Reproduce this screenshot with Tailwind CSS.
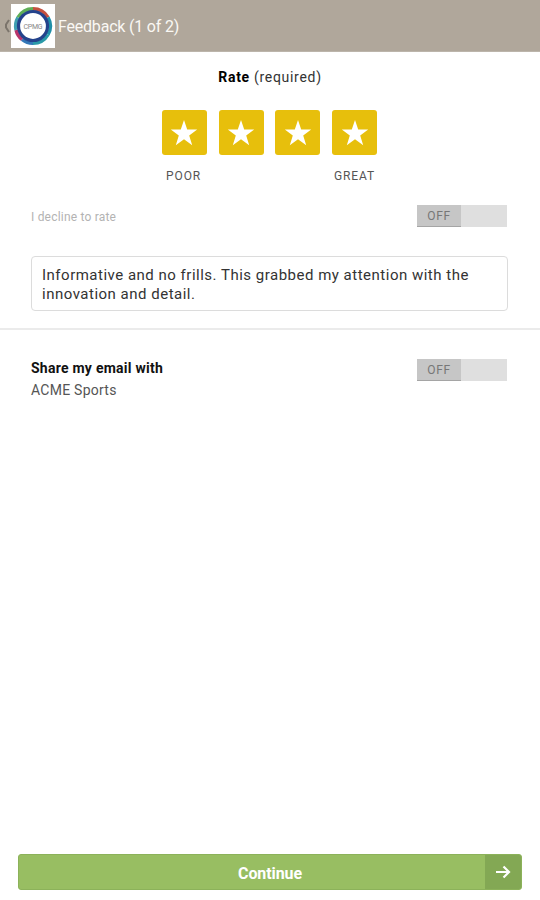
<!DOCTYPE html>
<html lang="en">
<head>
    <meta charset="UTF-8">
    <meta name="viewport" content="width=device-width, initial-scale=1.0">
    <title>Feedback</title>
    <script src="https://cdn.jsdelivr.net/npm/@tailwindcss/browser@4"></script>
</head>
<body class="bg-white font-['Roboto',sans-serif] text-[#333]">
    <div class="flex h-[900px] w-[540px] flex-col overflow-hidden">

        <header class="flex h-[52px] shrink-0 items-center border-b border-[#bcb5ab] bg-[#b0a79b]">
            <svg class="ml-[3px] h-4 w-2" viewBox="0 0 8 16" fill="none" stroke="#7b746b" stroke-width="2">
                <path d="M6 2L3 6.500v3L6 14"/>
            </svg>
            <div class="h-11 w-11 bg-white">
                <svg class="h-11 w-11" viewBox="0 0 44 44" fill="none">
                    <g stroke-width="3.500">
                        <path d="M22 4.700A17.300 17.300 0 0 1 37 13.400" stroke="#c4513f"/>
                        <path d="M37 13.400A17.300 17.300 0 0 1 37 30.700" stroke="#1f8fa8"/>
                        <path d="M37 30.700A17.300 17.300 0 0 1 22 39.300" stroke="#2a9aa8"/>
                        <path d="M22 39.300A17.300 17.300 0 0 1 11 35.500" stroke="#3478b8"/>
                        <path d="M11 35.500A17.300 17.300 0 0 1 5.100 26" stroke="#b8356c"/>
                        <path d="M5.100 26A17.300 17.300 0 0 1 7 13.400" stroke="#3f9fb0"/>
                        <path d="M7 13.400A17.300 17.300 0 0 1 22 4.700" stroke="#5fae57"/>
                    </g>
                    <circle cx="22" cy="22" r="14.500" stroke="#24438c" stroke-width="3.200"/>
                    <text x="22" y="24.500" text-anchor="middle" textLength="19" font-size="7" fill="#888">CPMG</text>
                </svg>
            </div>
            <h1 class="ml-[3px] mt-[2px] text-[16px] tracking-[-0.2px] text-[#faf8f4]">Feedback (1 of 2)</h1>
        </header>

        <section class="flex flex-col items-center">
            <h2 class="mt-[15px] text-[14px] leading-5 tracking-[0.7px]"><b class="font-bold text-black">Rate</b> (required)</h2>
            <div class="mt-[23px] flex gap-[11.700px] pr-px">
                <div class="flex h-[45px] w-[45px] items-center justify-center rounded-[3px] bg-[#e7bf0c]">
                    <svg class="h-7 w-7" viewBox="0 0 28 28" fill="#fff"><path d="M14 1l3.200 9.500h10l-8 6 3 9.700-8.200-5.900-8.200 5.900 3-9.700-8-6h10z"/></svg>
                </div>
                <div class="flex h-[45px] w-[45px] items-center justify-center rounded-[3px] bg-[#e7bf0c]">
                    <svg class="h-7 w-7" viewBox="0 0 28 28" fill="#fff"><path d="M14 1l3.200 9.500h10l-8 6 3 9.700-8.200-5.900-8.200 5.900 3-9.700-8-6h10z"/></svg>
                </div>
                <div class="flex h-[45px] w-[45px] items-center justify-center rounded-[3px] bg-[#e7bf0c]">
                    <svg class="h-7 w-7" viewBox="0 0 28 28" fill="#fff"><path d="M14 1l3.200 9.500h10l-8 6 3 9.700-8.200-5.900-8.200 5.900 3-9.700-8-6h10z"/></svg>
                </div>
                <div class="flex h-[45px] w-[45px] items-center justify-center rounded-[3px] bg-[#e7bf0c]">
                    <svg class="h-7 w-7" viewBox="0 0 28 28" fill="#fff"><path d="M14 1l3.200 9.500h10l-8 6 3 9.700-8.200-5.900-8.200 5.900 3-9.700-8-6h10z"/></svg>
                </div>
            </div>
            <div class="mt-[13px] flex w-[210px] justify-between pl-px text-[12px] leading-4 tracking-[0.9px] text-[#555]">
                <span>POOR</span>
                <span>GREAT</span>
            </div>
        </section>

        <section class="mt-[21px] flex items-center justify-between pl-[31px] pr-[33px]">
            <span class="mt-[2px] text-[12px] tracking-[0.2px] text-[#b3b3b3]">I decline to rate</span>
            <div class="flex h-[22px] w-[90px] bg-[#dfdfdf]">
                <span class="w-[44px] border-b border-[#a5a5a5] bg-[#c6c6c6] text-center text-[12px] leading-[23px] tracking-[0.6px] text-[#777]">OFF</span>
            </div>
        </section>

        <div class="ml-[31px] mt-[29px] h-[55px] w-[477px] rounded-[4px] border-[1.5px] border-[#dcdcdc] px-[10px] pt-[9px] text-[15px] leading-[19px] tracking-[0.5px]">
            Informative and no frills. This grabbed my attention with the<br>innovation and detail.
        </div>

        <hr class="mt-[17px] border-t-2 border-[#ebebeb]">

        <section class="mt-[27px] flex justify-between pl-[31px] pr-[33px]">
            <div class="text-[14px] leading-[22px] tracking-[0.25px]">
                <p class="font-bold text-[#111]">Share my email with</p>
                <p class="text-[#555]">ACME Sports</p>
            </div>
            <div class="mt-[2px] flex h-[22px] w-[90px] bg-[#dfdfdf]">
                <span class="w-[44px] border-b border-[#a5a5a5] bg-[#c6c6c6] text-center text-[12px] leading-[23px] tracking-[0.6px] text-[#777]">OFF</span>
            </div>
        </section>

        <button class="mx-[18px] mb-[10px] mt-auto flex h-9 overflow-hidden rounded-[3px] border border-[#8cb25a] bg-[#98be62] text-white">
            <span class="flex-1 pl-9 text-center text-[16px] font-bold leading-[38px] tracking-[-0.1px]">Continue</span>
            <span class="flex h-full w-9 items-center justify-center bg-[#83a854]">
                <svg class="h-4 w-4" viewBox="0 0 16 16" fill="none" stroke="#fff" stroke-width="2.200"><path d="M1 8h13M8.500 2.500L14 8l-5.500 5.500"/></svg>
            </span>
        </button>
    </div>
</body>
</html>
